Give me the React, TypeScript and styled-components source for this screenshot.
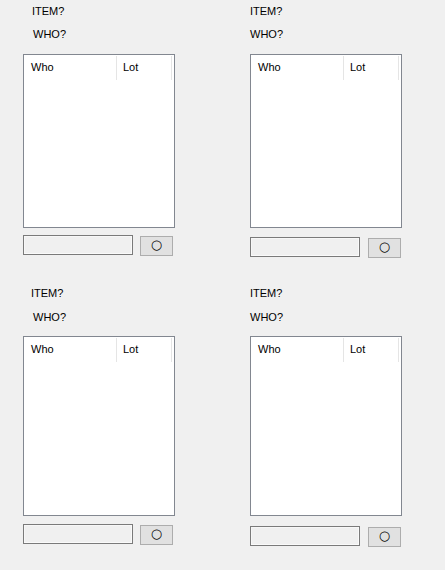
import React from "react";
import styled, { createGlobalStyle } from "styled-components";

const Global = createGlobalStyle`
  html, body { margin: 0; padding: 0; background: #f0f0f0; }
  body { font-family: "Liberation Sans", Arial, sans-serif; font-size: 11px; color: #000; }
`;

const Page = styled.div`
  width: 445px;
  height: 570px;
  box-sizing: border-box;
  padding: 5px 0 0 23px;
  display: grid;
  grid-template-columns: 152px 152px;
  grid-template-rows: 282px auto;
  column-gap: 75px;
  align-items: start;
`;

const Panel = styled.div`
  display: flex;
  flex-direction: column;
`;

const Label = styled.div<{ $indent: number; $gap?: number }>`
  height: 13px;
  line-height: 13px;
  font-size: 11px;
  margin-left: ${(p) => p.$indent}px;
  margin-top: ${(p) => p.$gap ?? 0}px;
  white-space: nowrap;
`;

const List = styled.div<{ $height: number; $gap: number }>`
  margin-top: ${(p) => p.$gap}px;
  box-sizing: border-box;
  width: 152px;
  height: ${(p) => p.$height}px;
  border: 1px solid #828790;
  background: #fff;
`;

const Header = styled.div`
  display: flex;
  height: 25px;
  padding-top: 1px;
  box-sizing: border-box;
`;

const HeaderCell = styled.div<{ $width: number; $pad: number }>`
  width: ${(p) => p.$width}px;
  height: 24px;
  box-sizing: border-box;
  border-right: 1px solid #e5e5e5;
  padding-left: ${(p) => p.$pad}px;
  line-height: 23px;
  font-size: 11px;
`;

const Controls = styled.div<{ $gap: number; $btnGap: number }>`
  display: flex;
  align-items: flex-start;
  margin-top: ${(p) => p.$gap}px;
  column-gap: ${(p) => p.$btnGap}px;
`;

const TextBox = styled.div`
  width: 110px;
  height: 20px;
  box-sizing: border-box;
  border: 1px solid #7a7a7a;
  background: #f0f0f0;
  box-shadow: inset -1px -1px 0 #fafafa, inset 1px 1px 0 #f7f7f7;
`;

const Button = styled.div`
  margin-top: 1px;
  width: 33px;
  height: 20px;
  box-sizing: border-box;
  border: 1px solid #adadad;
  background: #e1e1e1;
  display: flex;
  justify-content: center;
  align-items: flex-start;
  font-family: "DejaVu Sans", sans-serif;
  font-size: 13px;
  line-height: 15px;
  color: #000;
`;

type PanelProps = {
  itemIndent: number;
  whoIndent: number;
  whoGap: number;
  listGap: number;
  listHeight: number;
  controlsGap: number;
  btnGap: number;
};

function FormPanel(p: PanelProps) {
  return (
    <Panel>
      <Label $indent={p.itemIndent}>ITEM?</Label>
      <Label $indent={p.whoIndent} $gap={p.whoGap}>
        WHO?
      </Label>
      <List $height={p.listHeight} $gap={p.listGap}>
        <Header>
          <HeaderCell $width={93} $pad={7}>
            Who
          </HeaderCell>
          <HeaderCell $width={55} $pad={6}>
            Lot
          </HeaderCell>
        </Header>
      </List>
      <Controls $gap={p.controlsGap} $btnGap={p.btnGap}>
        <TextBox />
        <Button>○</Button>
      </Controls>
    </Panel>
  );
}

export default function App() {
  return (
    <>
      <Global />
      <Page>
        <FormPanel itemIndent={9} whoIndent={10} whoGap={10} listGap={13} listHeight={174} controlsGap={7} btnGap={7} />
        <FormPanel itemIndent={0} whoIndent={0} whoGap={10} listGap={13} listHeight={174} controlsGap={9} btnGap={8} />
        <FormPanel itemIndent={8} whoIndent={10} whoGap={11} listGap={12} listHeight={180} controlsGap={8} btnGap={7} />
        <FormPanel itemIndent={0} whoIndent={0} whoGap={11} listGap={12} listHeight={180} controlsGap={10} btnGap={8} />
      </Page>
    </>
  );
}
